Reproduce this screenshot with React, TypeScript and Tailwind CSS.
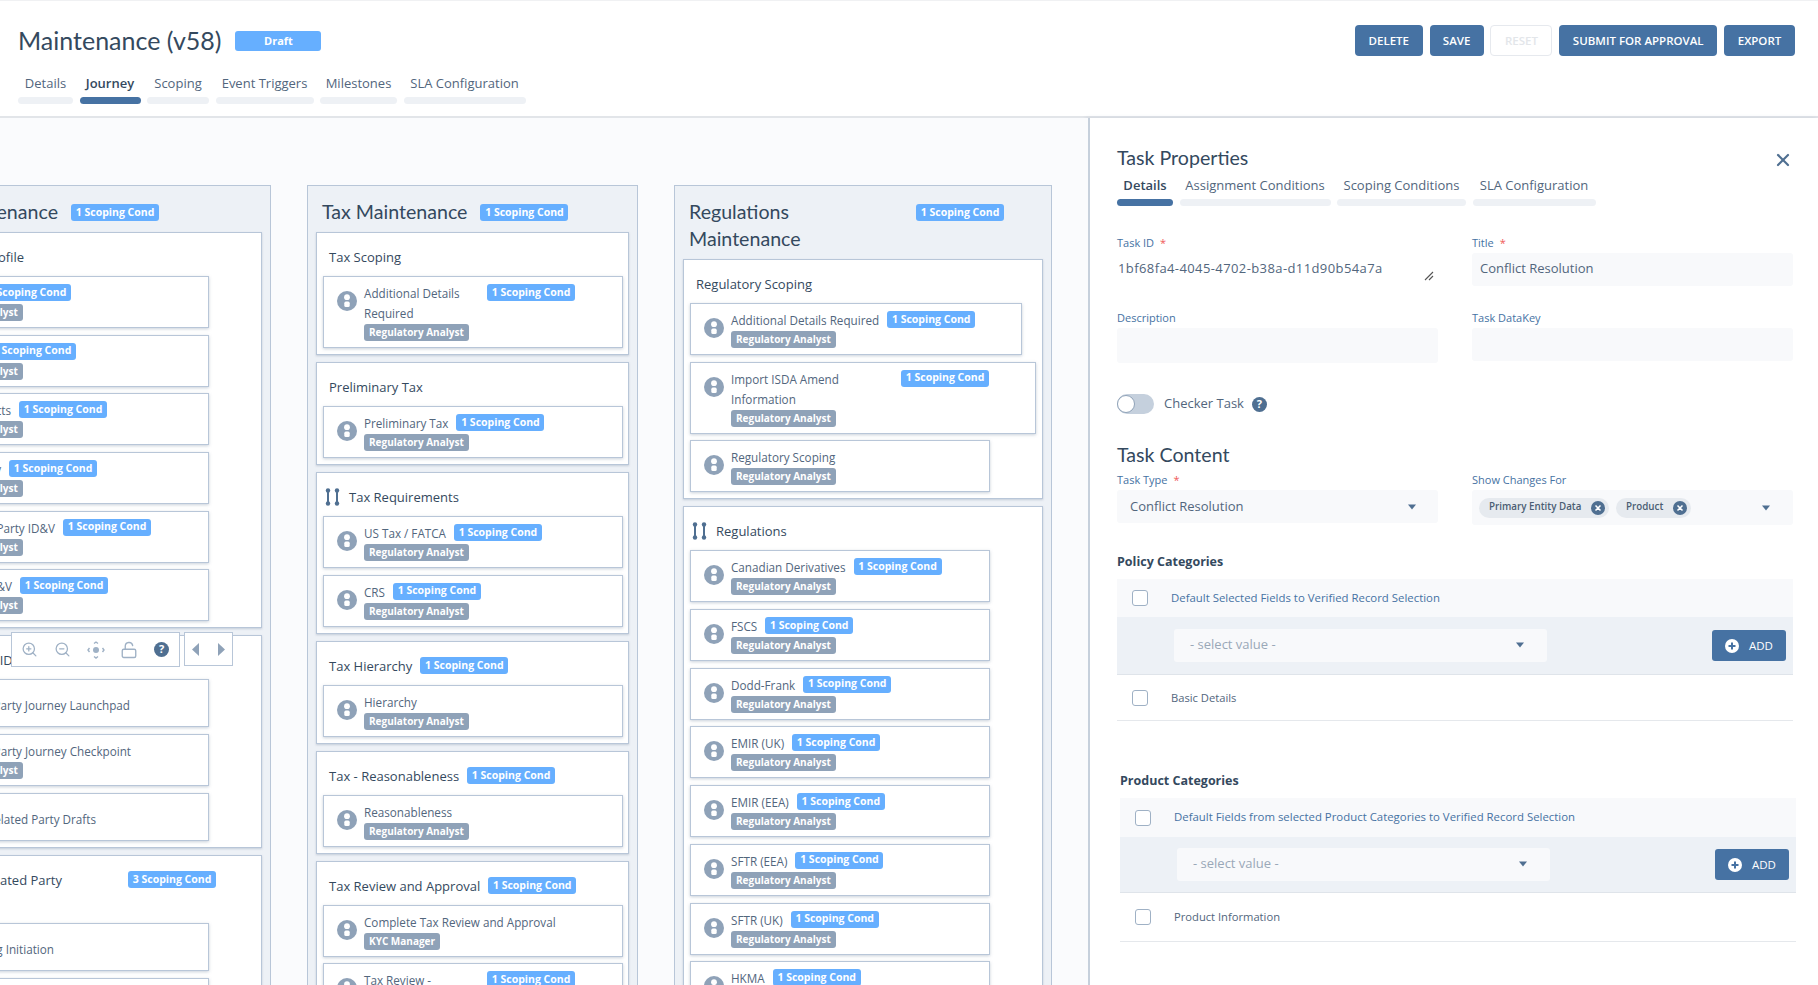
import {LockOpen, X, ZoomIn, ZoomOut} from 'lucide-react';

type Card = {
    text: string;
    badge?: boolean;
    role?: string;
    box?: string;
    width?: string;
};

type Section = {
    title: string;
    titleBox?: string;
    pins?: boolean;
    badge?: string;
    badgeClass?: string;
    tall?: boolean;
    cards: Card[];
};

const RA = 'Regulatory Analyst';

const cols: {title: string; titleBox: string; badgeGap: string; width: string; sections: Section[]}[] = [
    {
        title: 'Party Maintenance',
        titleBox: 'w-[182px] text-right',
        badgeGap: 'ml-[13px]',
        width: 'w-[410px]',
        sections: [
            {
                title: 'Related Party Profile',
                titleBox: 'w-[141px] text-right',
                cards: [
                    {text: 'Overview', box: 'w-[57px] text-right', badge: true, role: RA, width: 'w-[332px]'},
                    {text: 'Ownership', box: 'w-[62px] text-right', badge: true, role: RA, width: 'w-[332px]'},
                    {text: 'Party Contacts', box: 'w-[93px] text-right', badge: true, role: RA, width: 'w-[332px]'},
                    {text: 'Risk Summary', box: 'w-[83px] text-right', badge: true, role: RA, width: 'w-[332px]'},
                    {text: 'Related Party ID&V', box: 'w-[137px] text-right', badge: true, role: RA, width: 'w-[332px]'},
                    {text: 'Primary ID&V', box: 'w-[94px] text-right', badge: true, role: RA, width: 'w-[332px]'},
                ],
            },
            {
                title: 'Related Party ID&V',
                titleBox: 'w-[147px] text-right',
                cards: [
                    {text: 'Related Party Journey Launchpad', box: 'w-[212px] text-right', width: 'w-[332px]'},
                    {text: 'Related Party Journey Checkpoint', box: 'w-[213px] text-right', role: RA, width: 'w-[332px]'},
                    {text: 'All Related Party Drafts', box: 'w-[178px] text-right', width: 'w-[332px]'},
                ],
            },
            {
                title: 'Confirm Related Party',
                titleBox: 'w-[179px] text-right',
                badge: '3 Scoping Cond',
                badgeClass: 'ml-[66px]',
                tall: true,
                cards: [
                    {text: 'Screening Initiation', box: 'w-[136px] text-right', width: 'w-[332px]'},
                    {text: 'Screening Review', width: 'w-[332px]'},
                ],
            },
        ],
    },
    {
        title: 'Tax Maintenance',
        titleBox: '',
        badgeGap: 'ml-[13px]',
        width: 'w-[331px]',
        sections: [
            {title: 'Tax Scoping', cards: [{text: 'Additional Details Required', box: 'w-[115px]', badge: true, role: RA}]},
            {title: 'Preliminary Tax', cards: [{text: 'Preliminary Tax', badge: true, role: RA}]},
            {
                title: 'Tax Requirements',
                pins: true,
                cards: [
                    {text: 'US Tax / FATCA', badge: true, role: RA},
                    {text: 'CRS', badge: true, role: RA},
                ],
            },
            {title: 'Tax Hierarchy', badge: '1 Scoping Cond', cards: [{text: 'Hierarchy', role: RA}]},
            {title: 'Tax - Reasonableness', badge: '1 Scoping Cond', cards: [{text: 'Reasonableness', role: RA}]},
            {
                title: 'Tax Review and Approval',
                badge: '1 Scoping Cond',
                cards: [
                    {text: 'Complete Tax Review and Approval', role: 'KYC Manager'},
                    {text: 'Tax Review - Complete', box: 'w-[115px]', badge: true, role: RA},
                ],
            },
        ],
    },
    {
        title: 'Regulations Maintenance',
        titleBox: 'w-[160px]',
        badgeGap: 'ml-[67px]',
        width: 'w-[378px]',
        sections: [
            {
                title: 'Regulatory Scoping',
                cards: [
                    {text: 'Additional Details Required', badge: true, role: RA, width: 'w-[332px]'},
                    {text: 'Import ISDA Amend Information', box: 'w-[162px]', badge: true, role: RA, width: 'w-[346px]'},
                    {text: 'Regulatory Scoping', role: RA},
                ],
            },
            {
                title: 'Regulations',
                pins: true,
                cards: [
                    {text: 'Canadian Derivatives', badge: true, role: RA},
                    {text: 'FSCS', badge: true, role: RA},
                    {text: 'Dodd-Frank', badge: true, role: RA},
                    {text: 'EMIR (UK)', badge: true, role: RA},
                    {text: 'EMIR (EEA)', badge: true, role: RA},
                    {text: 'SFTR (EEA)', badge: true, role: RA},
                    {text: 'SFTR (UK)', badge: true, role: RA},
                    {text: 'HKMA', badge: true, role: RA},
                ],
            },
        ],
    },
];

const headerTabs = [
    {label: 'Details', w: 'w-[55px]'},
    {label: 'Journey', w: 'w-[61px]', active: true},
    {label: 'Scoping', w: 'w-[62px]'},
    {label: 'Event Triggers', w: 'w-[98px]'},
    {label: 'Milestones', w: 'w-[77px]'},
    {label: 'SLA Configuration', w: 'w-[122px]'},
];

const panelTabs = [
    {label: 'Details', w: 'w-[56px]', active: true},
    {label: 'Assignment Conditions', w: 'w-[151px]'},
    {label: 'Scoping Conditions', w: 'w-[129px]'},
    {label: 'SLA Configuration', w: 'w-[123px]'},
];

const Tabs = ({tabs}: {tabs: {label: string; w: string; active?: boolean}[]}) => (
    <div className="flex gap-[6.5px]">
        {tabs.map(t => (
            <div key={t.label} className={`${t.w} flex flex-col items-center`}>
                <div className={`h-5 text-[13px] leading-5 whitespace-nowrap ${t.active ? 'font-semibold text-[#34495e]' : 'text-[#52667d]'}`}>
                    {t.label}
                </div>
                <div className={`mt-1 h-[7px] w-full rounded-full ${t.active ? 'bg-[#4672a3]' : 'bg-[#eef1f5]'}`} />
            </div>
        ))}
    </div>
);

const ScopeBadge = ({label = '1 Scoping Cond', className = ''}: {label?: string; className?: string}) => (
    <span className={`flex h-[17px] w-[88px] shrink-0 items-center justify-center rounded-[3px] bg-[#66afff] text-[10.5px] font-bold whitespace-nowrap text-white ${className}`}>
        {label}
    </span>
);

const TaskIcon = () => (
    <svg width="20" height="20" viewBox="0 0 20 20" className="mt-[7px] shrink-0">
        <circle cx="10" cy="10" r="10" fill="#8fa2b8" />
        <circle cx="10" cy="6.2" r="2.9" fill="#fff" />
        <rect x="7.3" y="10.6" width="5.4" height="5.4" rx="1.6" fill="#fff" />
    </svg>
);

const Pins = () => (
    <svg width="15" height="18" viewBox="0 0 15 18" className="shrink-0" fill="#4f6f91">
        <circle cx="3" cy="2.5" r="2.2" />
        <circle cx="3" cy="15.5" r="2.2" />
        <rect x="2" y="2" width="2" height="14" />
        <circle cx="12" cy="2.5" r="2.2" />
        <circle cx="12" cy="15.5" r="2.2" />
        <rect x="11" y="2" width="2" height="14" />
    </svg>
);

const Caret = ({className = ''}: {className?: string}) => (
    <svg width="10" height="6" viewBox="0 0 10 6" className={className}>
        <path d="M1 0.5h8L5 5.5z" fill="#4f6f91" />
    </svg>
);

const Help = ({size}: {size: string}) => (
    <span className={`${size} flex shrink-0 items-center justify-center rounded-full bg-[#4f6f91] font-bold text-white`}>?</span>
);

const TaskCard = ({text, badge, role, box, width = 'w-[300px]'}: Card) => (
    <div className={`${width} flex gap-[7px] border border-[#b8c6d8] bg-white pt-[7px] pr-2 pb-[6px] pl-[13px] shadow-[0_1px_3px_rgba(100,120,150,0.35)] ${role ? '' : 'min-h-[48px] items-center'}`}>
        <TaskIcon />
        <div className="min-w-0">
            <div className="flex items-start gap-2">
                <div className={`${box ?? 'whitespace-nowrap'} ${role ? '-mt-px mb-px' : 'pt-[3px]'} shrink-0 text-[11.7px] leading-5 font-medium text-[#52667d]`}>{text}</div>
                {badge && <ScopeBadge />}
            </div>
            {role && (
                <span className="flex h-[17px] w-fit items-center rounded-[3px] bg-[#8fa2b8] px-[5px] text-[10px] font-bold whitespace-nowrap text-white">
                    {role}
                </span>
            )}
        </div>
    </div>
);

const SectionBox = ({section}: {section: Section}) => (
    <div className="border border-[#b8c6d8] bg-white px-[6px] pb-[6px] shadow-[0_1px_2px_rgba(100,120,150,0.3)]">
        <div className={`flex items-start pt-[14px] pl-[6px] ${section.tall ? 'h-[67px]' : 'h-[43px]'}`}>
            <div className="flex h-5 items-center">
                {section.pins && (
                    <span className="mr-[9px] -ml-[4px]">
                        <Pins />
                    </span>
                )}
                <div className={`${section.titleBox ?? ''} shrink-0 text-[13px] leading-5 whitespace-nowrap text-[#34495e]`}>{section.title}</div>
                {section.badge && <ScopeBadge label={section.badge} className={section.badgeClass ?? 'ml-2'} />}
            </div>
        </div>
        <div className="flex flex-col gap-[6.7px]">
            {section.cards.map(c => (
                <TaskCard key={c.text} {...c} />
            ))}
        </div>
    </div>
);

const Column = ({col}: {col: (typeof cols)[number]}) => (
    <div className={`${col.width} shrink-0 border border-[#b8c6d8] bg-[#edf1f6] px-2`}>
        <div className="flex items-start pt-[12px] pb-[7px] pl-[6px]">
            <div className={`${col.titleBox} shrink-0 font-['Lato',sans-serif] text-[19.6px] leading-[27px] text-[#34495e]`}>{col.title}</div>
            <ScopeBadge className={`${col.badgeGap} mt-[6px]`} />
        </div>
        <div className="flex flex-col gap-[7px]">
            {col.sections.map(s => (
                <SectionBox key={s.title} section={s} />
            ))}
        </div>
    </div>
);

const Toolbar = () => (
    <div className="absolute top-[514px] left-[11px] flex gap-1">
        <div className="flex h-[35px] w-[169px] items-center justify-between border border-[#b8c6d8] bg-white px-[9px] text-[#9fb1c5]">
            <ZoomIn size={17} strokeWidth={1.8} />
            <ZoomOut size={17} strokeWidth={1.8} />
            <svg width="18" height="18" viewBox="0 0 18 18" fill="none" stroke="#9fb1c5" strokeWidth="1.4">
                <circle cx="9" cy="9" r="3" fill="#9fb1c5" stroke="none" />
                <path d="M7 2.5L9 1l2 1.5M7 15.5L9 17l2-1.5M2.5 7L1 9l1.5 2M15.5 7L17 9l-1.5 2" />
            </svg>
            <LockOpen size={18} strokeWidth={1.8} />
            <Help size="h-[15px] w-[15px] text-[11px] mr-[1px]" />
        </div>
        <div className="flex h-[34px] w-[49px] items-center justify-between border border-[#b8c6d8] bg-white px-[7px]">
            <svg width="8" height="13" viewBox="0 0 8 13"><path d="M7 0v13L0 6.5z" fill="#8fa2b8" /></svg>
            <svg width="8" height="13" viewBox="0 0 8 13"><path d="M1 0v13l7-6.5z" fill="#8fa2b8" /></svg>
        </div>
    </div>
);

const Label = ({text, required}: {text: string; required?: boolean}) => (
    <div className="mb-[2px] h-4 text-[11px] leading-4 text-[#4672a3]">
        {text}
        {required && <span className="ml-[6px] text-[#ef5a5a]">*</span>}
    </div>
);

const AddPanel = ({title, defaultText, item, rowH, selectH, itemH, className}: {title: string; defaultText: string; item: string; rowH: string; selectH: string; itemH: string; className: string}) => (
    <div className={`w-[676px] ${className}`}>
        <div className="mb-2 h-[18px] text-[12.5px] leading-[18px] font-bold text-[#34495e]">{title}</div>
        <div className={`flex ${rowH} items-center gap-[23px] bg-[#f8f9fb] pl-[15px]`}>
            <span className="h-4 w-4 rounded-[3px] border-[1.5px] border-[#9fb1c5] bg-white" />
            <span className="pb-px text-[11.4px] font-medium text-[#4672a3]">{defaultText}</span>
        </div>
        <div className={`flex ${selectH} items-center justify-between border-b border-[#dfe4ea] bg-[#edf1f6] pr-[7px] pl-[57px]`}>
            <div className="flex h-[33px] w-[373px] items-center justify-between rounded-[3px] bg-[#f8f9fb] pr-[22px] pb-px pl-4 text-[13px] text-[#9aa8b8]">
                - select value -
                <Caret />
            </div>
            <button className="flex h-[31px] w-[74px] items-center gap-[10px] rounded-[3px] bg-[#4672a3] pl-[13px] text-[11.5px] font-medium text-white">
                <svg width="14" height="14" viewBox="0 0 14 14">
                    <circle cx="7" cy="7" r="7" fill="#fff" />
                    <path d="M7 3.5v7M3.5 7h7" stroke="#4672a3" strokeWidth="2" />
                </svg>
                ADD
            </button>
        </div>
        <div className={`flex ${itemH} items-center gap-[23px] border-b border-[#e5e8ec] pl-[15px]`}>
            <span className="h-4 w-4 rounded-[3px] border-[1.5px] border-[#9fb1c5] bg-white" />
            <span className="pt-px text-[11.2px] text-[#52667d]">{item}</span>
        </div>
    </div>
);

const Chip = ({label, w}: {label: string; w: string}) => (
    <span className={`${w} flex h-5 items-center justify-between rounded-full bg-[#e6eaef] pr-[4px] pl-[10px] text-[9.8px] font-semibold whitespace-nowrap text-[#4a5d73]`}>
        {label}
        <svg width="14" height="14" viewBox="0 0 14 14">
            <circle cx="7" cy="7" r="7" fill="#4f6f91" />
            <path d="M4.5 4.5l5 5M9.5 4.5l-5 5" stroke="#fff" strokeWidth="1.5" />
        </svg>
    </span>
);

const TaskPanel = () => (
    <div className="w-[730px] shrink-0 overflow-hidden border-l-2 border-[#c6d0dc] bg-white pt-7 pl-[27px] shadow-[-2px_0_4px_rgba(100,120,150,0.2)]">
        <div className="w-[676px]">
            <div className="flex h-6 items-center justify-between">
                <span className="font-['Lato',sans-serif] text-[19.6px] text-[#34495e]">Task Properties</span>
                <X size={20} strokeWidth={2.6} className="mt-1 text-[#4f6f91]" />
            </div>
            <div className="mt-[5px]">
                <Tabs tabs={panelTabs} />
            </div>
            <div className="mt-[29px] grid grid-cols-2 items-start gap-x-[34px] gap-y-6">
                <div>
                    <Label text="Task ID" required />
                    <div className="flex h-[33px] items-center justify-between pb-px pl-[1px] text-[13px] tracking-[0.4px] text-[#52667d]">
                        1bf68fa4-4045-4702-b38a-d11d90b54a7a
                        <svg width="10" height="10" viewBox="0 0 10 10" className="mt-[14px] mr-[4px]" stroke="#555" strokeWidth="1.1">
                            <path d="M1 9l8-8M5 9l4-4" />
                        </svg>
                    </div>
                </div>
                <div>
                    <Label text="Title" required />
                    <div className="flex h-[33px] items-center rounded-[3px] bg-[#f8f9fb] pb-px pl-2 text-[13px] text-[#52667d]">Conflict Resolution</div>
                </div>
                <div>
                    <Label text="Description" />
                    <div className="h-[35px] rounded-[3px] bg-[#f8f9fb]" />
                </div>
                <div>
                    <Label text="Task DataKey" />
                    <div className="h-[33px] rounded-[3px] bg-[#f8f9fb]" />
                </div>
            </div>
            <div className="mt-[31px] flex h-5 items-center">
                <span className="flex h-5 w-[37px] items-center rounded-full bg-[#c5d0dd]">
                    <span className="h-[18px] w-[18px] rounded-full border border-[#8fa2b8] bg-white" />
                </span>
                <span className="ml-[10px] text-[13px] text-[#52667d]">Checker Task</span>
                <Help size="h-[15px] w-[15px] text-[11px] ml-2" />
            </div>
            <div className="mt-[29px] h-6 font-['Lato',sans-serif] text-[19.6px] leading-6 text-[#34495e]">Task Content</div>
            <div className="mt-[5px] grid grid-cols-2 items-start gap-x-[34px]">
                <div>
                    <Label text="Task Type" required />
                    <div className="flex h-[33px] items-center justify-between rounded-[3px] bg-[#f8f9fb] pr-[21px] pl-[13px] text-[13px] text-[#52667d]">
                        Conflict Resolution
                        <Caret />
                    </div>
                </div>
                <div>
                    <Label text="Show Changes For" />
                    <div className="flex h-[35px] items-center rounded-[3px] bg-[#f8f9fb] pr-[22px] pl-[7px]">
                        <Chip label="Primary Entity Data" w="w-[130px]" />
                        <span className="ml-[7px]">
                            <Chip label="Product" w="w-[75px]" />
                        </span>
                        <Caret className="ml-auto" />
                    </div>
                </div>
            </div>
        </div>
        <AddPanel
            title="Policy Categories"
            defaultText="Default Selected Fields to Verified Record Selection"
            item="Basic Details"
            rowH="h-[38px]"
            selectH="h-[58px]"
            itemH="h-[46px]"
            className="mt-7"
        />
        <AddPanel
            title="Product Categories"
            defaultText="Default Fields from selected Product Categories to Verified Record Selection"
            item="Product Information"
            rowH="h-[39px]"
            selectH="h-[56px]"
            itemH="h-[49px]"
            className="mt-[51px] ml-[3px]"
        />
    </div>
);

const buttons = [
    {label: 'DELETE', w: 'w-[68px]'},
    {label: 'SAVE', w: 'w-[54px]'},
    {label: 'RESET', w: 'w-[62px]', off: true},
    {label: 'SUBMIT FOR APPROVAL', w: 'w-[158px]'},
    {label: 'EXPORT', w: 'w-[71px]'},
];

export default function App() {
    return (
        <div className="flex h-[985px] w-[1818px] flex-col overflow-hidden bg-white font-['Open_Sans',sans-serif]">
            <header className="flex h-[118px] shrink-0 justify-between border-t border-b-2 border-t-[#f0f1f3] border-b-[#e2e5e9] pr-[23px] pl-[18px]">
                <div>
                    <div className="mt-[26px] flex h-[28px] items-center">
                        <span className="font-['Lato',sans-serif] text-[25px] text-[#34495e]">Maintenance (v58)</span>
                        <span className="ml-[14px] flex h-5 w-[86px] items-center justify-center rounded-[3px] bg-[#66afff] text-[11px] font-bold text-white">Draft</span>
                    </div>
                    <div className="mt-[18px]">
                        <Tabs tabs={headerTabs} />
                    </div>
                </div>
                <div className="mt-6 flex gap-[6.8px]">
                    {buttons.map(b => (
                        <button
                            key={b.label}
                            className={`${b.w} h-[31px] rounded-[4px] text-[11.5px] font-semibold ${b.off ? 'border border-[#e6e9ee] text-[#e3e6ea]' : 'bg-[#4672a3] text-white'}`}
                        >
                            {b.label}
                        </button>
                    ))}
                </div>
            </header>
            <div className="flex min-h-0 flex-1">
                <div className="relative min-w-0 flex-1 overflow-hidden bg-[#fafbfd] pt-[67px]">
                    <div className="-ml-[139px] flex items-start gap-9">
                        {cols.map(c => (
                            <Column key={c.title} col={c} />
                        ))}
                    </div>
                    <Toolbar />
                </div>
                <TaskPanel />
            </div>
        </div>
    );
}
